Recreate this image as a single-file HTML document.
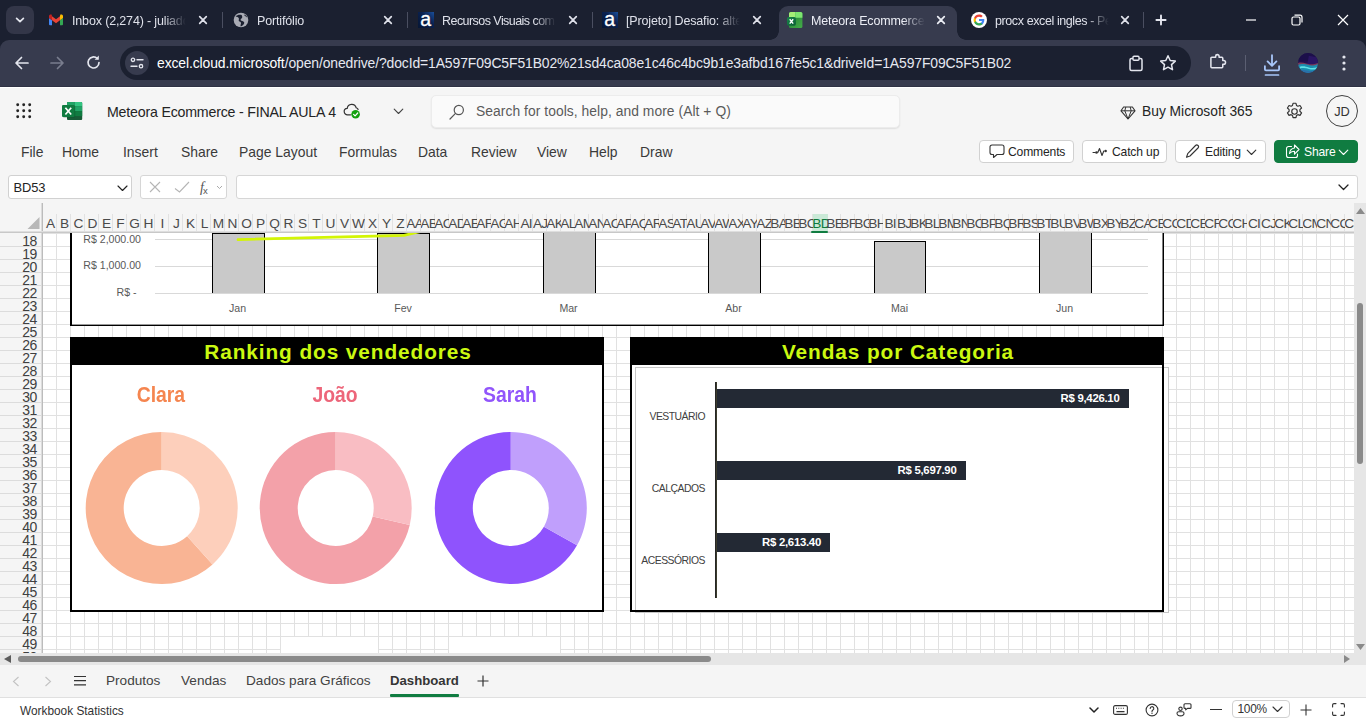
<!DOCTYPE html>
<html lang="en"><head><meta charset="utf-8"><title>Meteora Ecommerce - FINAL AULA 4</title>
<style>
*{box-sizing:border-box;margin:0;padding:0}
html,body{width:1366px;height:720px;overflow:hidden;background:#fff;font-family:"Liberation Sans",sans-serif;color:#242424}
body{position:relative}
.abs{position:absolute}
svg{display:block}
/* ---------- browser chrome ---------- */
#tabstrip{position:absolute;left:0;top:0;width:1366px;height:52px;background:#1b2030}
#toolbar{position:absolute;left:0;top:40px;width:1366px;height:47px;background:#373b4e;border-radius:9px 9px 0 0;box-shadow:inset 0 -1px 0 #2f3244}
#tabsearch{position:absolute;left:6px;top:6px;width:28px;height:28px;border-radius:8px;background:#333648}
.tab{position:absolute;top:6px;height:34px;width:180px;color:#dfe1ea;font-size:12.5px;line-height:28px;white-space:nowrap}
.tab .ico{position:absolute;left:9px;top:6px;width:16px;height:16px}
.tab .tt{position:absolute;left:33px;top:1px;width:115px;overflow:hidden;letter-spacing:-0.15px;
  -webkit-mask-image:linear-gradient(90deg,#000 80%,transparent 99%);mask-image:linear-gradient(90deg,#000 80%,transparent 99%)}
.tab .cl{position:absolute;left:157.500px;top:8px;width:12px;height:12px}
.tab.active{background:#373b4e;border-radius:9px 9px 0 0;color:#eceef5}
.tab.active:before,.tab.active:after{content:"";position:absolute;bottom:0;width:9px;height:9px;background:radial-gradient(circle at 0 0,transparent 8.5px,#373b4e 9px)}
.tab.active:before{left:-9px}
.tab.active:after{right:-9px;background:radial-gradient(circle at 100% 0,transparent 8.5px,#373b4e 9px)}
.tsep{position:absolute;top:12px;width:1px;height:16px;background:#4a4e60}
#urlbar{position:absolute;left:120px;top:6px;width:1071px;height:34px;border-radius:17px;background:#1b2030}
#urlbar .site{position:absolute;left:5px;top:5px;width:24px;height:24px;border-radius:12px;background:#373b4e}
#urlbar .url{position:absolute;left:37px;top:1px;line-height:33px;font-size:13.95px;color:#e6e8f0;white-space:nowrap;letter-spacing:-0.12px}
#urlbar .url b{font-weight:normal;color:#fff}
.tbi{position:absolute}
/* ---------- excel header ---------- */
#xl{position:absolute;left:0;top:87px;width:1366px;height:125px;background:#f5f5f5;box-shadow:inset 0 1px 0 #fff}
#xltitle{position:absolute;left:107px;top:14.500px;font-size:14.2px;line-height:20px;color:#242424;white-space:nowrap;letter-spacing:-0.2px}
#search{position:absolute;left:431px;top:7.500px;width:469px;height:33px;background:#fafafa;border:1px solid #ececec;border-radius:5px;box-shadow:0 1px 1.500px rgba(0,0,0,.09)}
#search span{position:absolute;left:44px;top:0;line-height:31px;font-size:13.85px;color:#5a5a5a;white-space:nowrap;letter-spacing:0.05px}
#buy{position:absolute;left:1142px;top:15px;font-size:13.8px;line-height:20px;white-space:nowrap}
#avatar{position:absolute;left:1326px;top:8px;width:32px;height:32px;border-radius:16px;border:1px solid #424242;font-size:12.8px;line-height:31px;text-align:center;color:#333}
.mi{position:absolute;top:55px;font-size:13.9px;line-height:20px;color:#3a3a3a;white-space:nowrap}
.rb{position:absolute;top:53px;height:23px;border:1px solid #d1d1d1;border-radius:4px;background:#fff;font-size:12.1px;line-height:21px;letter-spacing:-0.15px;color:#242424;white-space:nowrap}
.rb span{position:absolute;top:1px}
.rb.green{background:#107c41;border-color:#107c41;color:#fff}
#namebox{position:absolute;left:8px;top:88px;width:124px;height:24px;background:#fff;border:1px solid #d1d1d1;border-radius:3px;font-size:12.9px;line-height:24px;padding-left:4.500px;color:#222;letter-spacing:-0.1px}
#fxbox{position:absolute;left:140px;top:88px;width:87px;height:24px;background:#fff;border:1px solid #d6d6d6;border-radius:3px}
#fbar{position:absolute;left:236px;top:88px;width:1122px;height:24px;background:#fff;border:1px solid #d6d6d6;border-radius:3px}
/* ---------- grid ---------- */
#colhdr{position:absolute;left:0;top:212px;width:1354px;height:21px;background-color:#f5f5f5;background-image:linear-gradient(90deg,#e2e2e2 1px,transparent 1px);background-size:14px 19px;background-position:0 2px;background-repeat:repeat-x;overflow:hidden;z-index:3}
#colhdr .hl{position:absolute;left:0;top:19px;width:1354px;height:2px;background:linear-gradient(#e9e9e9,#bdbdbd)}
#colhdr .ul{position:absolute;left:811px;top:19px;width:17px;height:2px;background:#107c41;border-radius:1px}
#colhdr .selall{position:absolute;left:0;top:0;width:43px;height:20px;border-right:1px solid #bcbcbc;box-shadow:inset -1px 0 0 #dcdcdc;background:#f5f5f5}
.ch{position:absolute;top:0;width:14px;height:19px;overflow:hidden;font-size:13.7px;line-height:24px;color:#4a4a4a;white-space:nowrap;text-align:left;letter-spacing:-0.75px;padding-left:0;text-indent:-0.700px}
.ch.one{text-align:center;letter-spacing:0;padding-left:1px;text-indent:0}
.ch.ctr{text-align:center;letter-spacing:-0.9px;padding-left:0;text-indent:0}
.ch.sel{background:#cae9d7;color:#0e7a3e;top:2px;height:17px;line-height:20px;width:15px;overflow:hidden}
#rowhdr{position:absolute;left:0;top:232px;width:43px;height:421px;background:#f5f5f5;border-right:1px solid #bcbcbc;box-shadow:inset -1px 0 0 #dcdcdc;overflow:hidden}
.rh{position:absolute;left:0;width:36.700px;padding-right:5.300px;text-align:right;font-size:14px;letter-spacing:-0.55px;line-height:16px;color:#404040;height:13px;border-bottom:1px solid #dcdcdc;box-sizing:content-box}
#sheet{position:absolute;left:43px;top:232px;width:1311px;height:421px;overflow:hidden;background-color:#fff;
 background-image:linear-gradient(90deg,#e1e1e1 1px,transparent 1px),linear-gradient(#e1e1e1 1px,transparent 1px);
 background-size:14px 13px;background-position:13px 1px}
#vscroll{position:absolute;left:1354px;top:203px;width:12px;height:450px;background:#e6e6e6;z-index:4}
#hscroll{position:absolute;left:0;top:653px;width:1366px;height:12px;background:#e6e6e6}
#tabsbar{position:absolute;left:0;top:665px;width:1366px;height:33px;background:#f5f5f5;border-bottom:1px solid #e0e0e0}
.st{position:absolute;top:6px;font-size:13.6px;line-height:20px;color:#424242;white-space:nowrap}
#status{position:absolute;left:0;top:698px;width:1366px;height:22px;background:#fff}
#status .ws{position:absolute;left:20px;top:5px;font-size:11.85px;line-height:16px;color:#333}
/* ---------- charts ---------- */
.cl1{position:absolute;font-size:10.6px;line-height:14px;color:#595959;white-space:nowrap}
.cl2{position:absolute;font-size:10.4px;line-height:14px;color:#404040;white-space:nowrap;letter-spacing:-0.5px}
.ttl{position:absolute;height:28px;background:#000;text-align:center;color:#cbf911;font-weight:bold;font-size:20.8px;line-height:29px;white-space:nowrap;letter-spacing:0.92px}
.ttl span{display:inline-block;padding-left:2px}
.nm{position:absolute;width:100px;text-align:center;font-weight:bold;font-size:21.5px;line-height:28px;white-space:nowrap}
.nm span{display:inline-block;transform:scaleX(.9)}
.vl{position:absolute;right:9px;top:0;line-height:19px;font-size:11.4px;font-weight:bold;color:#fff;white-space:nowrap;letter-spacing:-0.28px}

</style></head><body>
<div id="tabstrip">
  <div id="tabsearch"><svg class="abs" style="left:8px;top:9px" width="12" height="10" viewBox="0 0 12 10"><path d="M2.600 3.300 L6 6.700 L9.400 3.300" fill="none" stroke="#e4e6ee" stroke-width="1.700" stroke-linecap="round" stroke-linejoin="round"/></svg></div>

  <div class="tab" style="left:39px">
    <svg class="ico" viewBox="0 0 16 16"><path d="M1 5.900L4 8.200V13.200H2A1 1 0 0 1 1 12.200z" fill="#4285f4"/><path d="M15 5.900L12 8.200V13.200h2a1 1 0 0 0 1-1z" fill="#34a853"/><path d="M4 4.200L8 7.200l4-3v4l-4 3-4-3z" fill="#ea4335"/><path d="M1 5.900V4.100c0-1.500 1.700-2.200 2.800-1.300L4 4.200v4z" fill="#c5221f"/><path d="M15 5.900V4.100c0-1.500-1.700-2.200-2.800-1.300L12 4.200v4z" fill="#fbbc04"/></svg>
    <div class="tt">Inbox (2,274) - juliadomingues</div>
    <svg class="cl" viewBox="0 0 12 12"><path d="M2.700 2.700l6.600 6.600M9.300 2.700l-6.600 6.600" stroke="#dfe1ea" stroke-width="1.700" stroke-linecap="round"/></svg>
  </div>
  <div class="tsep" style="left:222px"></div>

  <div class="tab" style="left:224px">
    <svg class="ico" viewBox="0 0 16 16"><circle cx="8" cy="8" r="7.300" fill="#a9abb4"/><path d="M2.600 4.600c1.500.2 2.700.7 3.200 1.700.5 1.100-.5 1.700.1 2.600.6.900 1.900.7 2.100 1.900.2 1.100-.7 2-.4 3.600 1.700-.5 2.900-1.700 3.500-2.900.5-1-.1-1.900-1.100-2.300-1-.4-2-.3-2.400-1.200-.4-1 1.300-1.500 1.600-2.600.2-.800-.1-1.700-.7-2.400-2.200-.6-4.600.1-5.900 1.600z" fill="#1b2030"/><path d="M11.400 2.600c-.3.800.3 1.300 1 1.700.8.400 1.100 1.100 1.900 1.300-.5-1.300-1.600-2.400-2.900-3z" fill="#1b2030"/></svg>
    <div class="tt">Portifólio</div>
    <svg class="cl" viewBox="0 0 12 12"><path d="M2.700 2.700l6.600 6.600M9.300 2.700l-6.600 6.600" stroke="#dfe1ea" stroke-width="1.700" stroke-linecap="round"/></svg>
  </div>
  <div class="tsep" style="left:407px"></div>

  <div class="tab" style="left:409px">
    <svg class="ico" viewBox="0 0 16 16"><defs><linearGradient id="alg" x1="0" y1="1" x2="1" y2="0"><stop offset="0" stop-color="#061634"/><stop offset=".6" stop-color="#0a2150"/><stop offset="1" stop-color="#1a4f9c"/></linearGradient></defs><rect width="16" height="16" fill="url(#alg)"/><text x="7.800" y="14.200" style="font-family:'Liberation Sans',sans-serif;font-size:19.500px;font-weight:normal" text-anchor="middle" fill="#fff" stroke="#fff" stroke-width=".3">a</text></svg>
    <div class="tt" style="letter-spacing:-0.55px">Recursos Visuais com Excel</div>
    <svg class="cl" viewBox="0 0 12 12"><path d="M2.700 2.700l6.600 6.600M9.300 2.700l-6.600 6.600" stroke="#dfe1ea" stroke-width="1.700" stroke-linecap="round"/></svg>
  </div>
  <div class="tsep" style="left:592px"></div>

  <div class="tab" style="left:593px">
    <svg class="ico" viewBox="0 0 16 16"><rect width="16" height="16" fill="url(#alg)"/><text x="7.800" y="14.200" style="font-family:'Liberation Sans',sans-serif;font-size:19.500px;font-weight:normal" text-anchor="middle" fill="#fff" stroke="#fff" stroke-width=".3">a</text></svg>
    <div class="tt">[Projeto] Desafio: alterar</div>
    <svg class="cl" viewBox="0 0 12 12"><path d="M2.700 2.700l6.600 6.600M9.300 2.700l-6.600 6.600" stroke="#dfe1ea" stroke-width="1.700" stroke-linecap="round"/></svg>
  </div>

  <div class="tab active" style="left:779px;width:178px">
    <svg class="ico" style="left:8px" viewBox="0 0 16 16"><defs><linearGradient id="xg1" x1="0" y1="0" x2="1" y2="1"><stop offset="0" stop-color="#1f7a35"/><stop offset="1" stop-color="#44ad48"/></linearGradient><linearGradient id="xg2" x1="0" y1="0" x2="1" y2="1"><stop offset="0" stop-color="#17864a"/><stop offset="1" stop-color="#0c5c34"/></linearGradient></defs><rect x="2" y="0" width="13.400" height="16" rx="1.600" fill="url(#xg1)"/><path d="M3.600 0H8.200V5.700H2V1.600A1.600 1.600 0 0 1 3.600 0z" fill="#a4ee76"/><path d="M8.200 0h5.600a1.600 1.600 0 0 1 1.600 1.600V5.700H8.200z" fill="#7de570"/><rect x="0" y="5" width="8.900" height="8.800" rx="1.700" fill="url(#xg2)"/><path d="M2.700 7.300l3.500 4.300M6.200 7.300l-3.500 4.300" stroke="#fff" stroke-width="1.350"/></svg>
    <div class="tt" style="left:32px">Meteora Ecommerce - FINAL</div>
    <svg class="cl" style="left:156px" viewBox="0 0 12 12"><path d="M2.700 2.700l6.600 6.600M9.300 2.700l-6.600 6.600" stroke="#eceef5" stroke-width="1.700" stroke-linecap="round"/></svg>
  </div>

  <div class="tab" style="left:962px">
    <svg class="ico" viewBox="0 0 16 16"><circle cx="8" cy="8" r="8" fill="#fff"/><path d="M13.300 8.100c0-.4 0-.8-.1-1.100H8v2.100h3c-.1.700-.5 1.300-1.100 1.700v1.400h1.800c1-1 1.600-2.400 1.600-4.100z" fill="#4285f4"/><path d="M8 13.500c1.500 0 2.700-.5 3.600-1.300l-1.800-1.400c-.5.300-1.100.5-1.800.5-1.400 0-2.600-.9-3-2.200H3.200v1.400c.9 1.800 2.700 3 4.800 3z" fill="#34a853"/><path d="M5 9.100c-.1-.3-.2-.7-.2-1.100s.1-.8.200-1.100V5.500H3.200C2.800 6.200 2.600 7.100 2.600 8s.2 1.800.6 2.500L5 9.100z" fill="#fbbc05"/><path d="M8 4.700c.8 0 1.500.3 2.100.8l1.600-1.600C10.700 3 9.500 2.500 8 2.500c-2.100 0-3.900 1.200-4.800 3L5 6.900c.4-1.300 1.600-2.200 3-2.200z" fill="#ea4335"/></svg>
    <div class="tt" style="letter-spacing:-0.4px">procx excel ingles - Pesquisa</div>
    <svg class="cl" style="left:156.500px" viewBox="0 0 12 12"><path d="M2.700 2.700l6.600 6.600M9.300 2.700l-6.600 6.600" stroke="#dfe1ea" stroke-width="1.700" stroke-linecap="round"/></svg>
  </div>
  <div class="tsep" style="left:1143px"></div>
  <svg class="abs" style="left:1154px;top:13px" width="14" height="14" viewBox="0 0 14 14"><path d="M7 2.400v9.200M2.400 7h9.200" stroke="#e4e6ee" stroke-width="1.900" stroke-linecap="round"/></svg>

  <!-- window controls -->
  <svg class="abs" style="left:1245px;top:14px" width="12" height="12" viewBox="0 0 12 12"><path d="M1 6h10" stroke="#fff" stroke-width="1.200"/></svg>
  <svg class="abs" style="left:1291px;top:14px" width="12" height="12" viewBox="0 0 12 12"><rect x="1" y="3" width="8" height="8" rx="1.500" fill="none" stroke="#fff" stroke-width="1.200"/><path d="M3.500 1.200H9a2 2 0 0 1 2 2v5.300" fill="none" stroke="#fff" stroke-width="1.200"/></svg>
  <svg class="abs" style="left:1337px;top:14px" width="12" height="12" viewBox="0 0 12 12"><path d="M1 1l10 10M11 1L1 11" stroke="#fff" stroke-width="1.200"/></svg>
</div>

<div id="toolbar">
  <svg class="tbi" style="left:14px;top:15px" width="16" height="16" viewBox="0 0 16 16"><path d="M14 8H2.500M7.500 2.500L2 8l5.500 5.500" fill="none" stroke="#e4e6ee" stroke-width="1.700" stroke-linecap="round" stroke-linejoin="round"/></svg>
  <svg class="tbi" style="left:49px;top:15px" width="16" height="16" viewBox="0 0 16 16"><path d="M2 8h11.500M8.500 2.500L14 8l-5.500 5.500" fill="none" stroke="#797d8e" stroke-width="1.700" stroke-linecap="round" stroke-linejoin="round"/></svg>
  <svg class="tbi" style="left:85px;top:14px" width="17" height="17" viewBox="0 0 17 17"><path d="M14 8.500a5.500 5.500 0 1 1-1.700-4" fill="none" stroke="#e4e6ee" stroke-width="1.700" stroke-linecap="round"/><path d="M13.800 1.500v4.200H9.600z" fill="#e4e6ee"/></svg>
  <div id="urlbar">
    <div class="site"><svg class="abs" style="left:5px;top:6px" width="14" height="12" viewBox="0 0 14 12"><circle cx="3" cy="2.800" r="1.700" fill="none" stroke="#e4e6ee" stroke-width="1.300"/><path d="M7 2.800h6" stroke="#e4e6ee" stroke-width="1.400" stroke-linecap="round"/><circle cx="11" cy="9.200" r="1.700" fill="none" stroke="#e4e6ee" stroke-width="1.300"/><path d="M1 9.200h6" stroke="#e4e6ee" stroke-width="1.400" stroke-linecap="round"/></svg></div>
    <div class="url"><b>excel.cloud.microsoft</b>/open/onedrive/?docId=1A597F09C5F51B02%21sd4ca08e1c46c4bc9b1e3afbd167fe5c1&amp;driveId=1A597F09C5F51B02</div>
    <svg class="abs" style="left:1008px;top:9px" width="16" height="17" viewBox="0 0 16 17"><rect x="2" y="3.500" width="12" height="12" rx="1.500" fill="none" stroke="#e4e6ee" stroke-width="1.500"/><rect x="5" y="1.200" width="6" height="4" rx="1" fill="#1b2030" stroke="#e4e6ee" stroke-width="1.400"/></svg>
    <svg class="abs" style="left:1039px;top:8px" width="18" height="18" viewBox="0 0 18 18"><path d="M9 1.800l2.200 4.700 5.100.6-3.800 3.500 1 5.100L9 13.200l-4.500 2.500 1-5.100L1.700 7.100l5.100-.6z" fill="none" stroke="#e4e6ee" stroke-width="1.500" stroke-linejoin="round"/></svg>
  </div>
  <svg class="tbi" style="left:1209px;top:13px" width="18" height="18" viewBox="0 0 18 18"><path d="M7 3.500a1.800 1.800 0 0 1 3.600 0V4.500H13.500a1 1 0 0 1 1 1V8h1a1.900 1.900 0 0 1 0 3.800h-1v2.700a1 1 0 0 1-1 1H3a1 1 0 0 1-1-1V5.500a1 1 0 0 1 1-1h4z" fill="none" stroke="#e4e6ee" stroke-width="1.600" stroke-linejoin="round" transform="scale(.95)"/></svg>
  <div class="abs" style="left:1245px;top:15px;width:1px;height:16px;background:#5b5f72"></div>
  <svg class="tbi" style="left:1263px;top:14px" width="18" height="22" viewBox="0 0 18 22"><path d="M9 1.200v10.500M4.600 7.400L9 11.800l4.400-4.400" fill="none" stroke="#a8c7fa" stroke-width="1.800" stroke-linecap="round" stroke-linejoin="round"/><path d="M1.900 12.200v3.100a1 1 0 0 0 1 1h12.200a1 1 0 0 0 1-1v-3.100" fill="none" stroke="#a8c7fa" stroke-width="1.800" stroke-linecap="round" stroke-linejoin="round"/><path d="M2.500 21h13" stroke="#a8c7fa" stroke-width="1.700" stroke-linecap="round"/></svg>
  <svg class="tbi" style="left:1298px;top:13px" width="20" height="20" viewBox="0 0 22 22"><defs><clipPath id="avc"><circle cx="11" cy="11" r="11"/></clipPath></defs><g clip-path="url(#avc)"><rect width="22" height="22" fill="#23104f"/><path d="M0 0h22v9H0z" fill="#1c0f4a"/><path d="M12 3l10 2v8H10z" fill="#2a1563"/><path d="M0 11c3-1 6-.5 9 .5s8 1.500 13-.5v4H0z" fill="#7a3b5a"/><path d="M0 13c4-1.500 8-1 11 0s7 1 11-1v10H0z" fill="#1a8fb0"/><path d="M2 15c4-1 7 0 10 1s6 .5 10-.5v2c-4 1-7 1-10 0s-6-1.500-10-.5z" fill="#5fe0e6"/><path d="M0 19c5-1 9 0 12 .5s7 0 10-1V22H0z" fill="#2b6fa8"/></g></svg>
  <svg class="tbi" style="left:1341px;top:14px" width="6" height="18" viewBox="0 0 6 18"><circle cx="3" cy="3" r="1.600" fill="#e4e6ee"/><circle cx="3" cy="9" r="1.600" fill="#e4e6ee"/><circle cx="3" cy="15" r="1.600" fill="#e4e6ee"/></svg>
</div>
<div id="xl">
  <!-- waffle -->
  <svg class="abs" style="left:16px;top:16px" width="16" height="16" viewBox="0 0 16 16"><g fill="#242424"><circle cx="1.700" cy="1.700" r="1.450"/><circle cx="7.700" cy="1.700" r="1.450"/><circle cx="13.700" cy="1.700" r="1.450"/><circle cx="1.700" cy="7.700" r="1.450"/><circle cx="7.700" cy="7.700" r="1.450"/><circle cx="13.700" cy="7.700" r="1.450"/><circle cx="1.700" cy="13.700" r="1.450"/><circle cx="7.700" cy="13.700" r="1.450"/><circle cx="13.700" cy="13.700" r="1.450"/></g></svg>
  <!-- excel logo -->
  <svg class="abs" style="left:62px;top:15px" width="21" height="18" viewBox="0 0 21 18"><rect x="5" y="0" width="15.200" height="18" rx="1" fill="#185c37"/><path d="M6 0h6.800v4.100H5V1a1 1 0 0 1 1-1z" fill="#21a366"/><path d="M12.800 0h6.400a1 1 0 0 1 1 1v3.100h-7.400z" fill="#33c481"/><rect x="5" y="4.100" width="7.800" height="5" fill="#107c41"/><rect x="12.800" y="4.100" width="7.400" height="5" fill="#21a366"/><rect x="5" y="9.100" width="7.800" height="5" fill="#185c37"/><rect x="12.800" y="9.100" width="7.400" height="5" fill="#107c41"/><rect x="1" y="3.600" width="12.200" height="12" rx="1" fill="#0b4c2a" opacity=".45"/><rect x="0" y="3" width="12.600" height="12" rx="1.100" fill="#107c41"/><path d="M3.400 5.700l5.800 6.800M9.200 5.700l-5.800 6.800" stroke="#fff" stroke-width="1.700"/></svg>
  <div id="xltitle">Meteora Ecommerce - FINAL AULA 4</div>
  <!-- cloud saved -->
  <svg class="abs" style="left:343px;top:16px" width="19" height="16" viewBox="0 0 19 16"><path d="M7.500 11.800H4.600a3.200 3.200 0 0 1-.4-6.400 4.600 4.600 0 0 1 9-.6 3.300 3.300 0 0 1 1.900 1.600" fill="none" stroke="#333" stroke-width="1.200" stroke-linecap="round"/><circle cx="12.600" cy="11.200" r="4.300" fill="#13a10e"/><path d="M10.600 11.300l1.500 1.500 2.600-2.800" fill="none" stroke="#fff" stroke-width="1.200" stroke-linecap="round" stroke-linejoin="round"/></svg>
  <svg class="abs" style="left:393px;top:21px" width="11" height="7" viewBox="0 0 11 7"><path d="M1.200 1.200l4.300 4.300 4.300-4.300" fill="none" stroke="#444" stroke-width="1.100" stroke-linecap="round" stroke-linejoin="round"/></svg>
  <div id="search">
    <svg class="abs" style="left:17px;top:8px" width="16" height="16" viewBox="0 0 16 16"><circle cx="9.800" cy="6" r="4.600" fill="none" stroke="#555" stroke-width="1.200"/><path d="M6.500 9.400L1 15" stroke="#555" stroke-width="1.200" stroke-linecap="round"/></svg>
    <span>Search for tools, help, and more (Alt + Q)</span>
  </div>
  <!-- diamond -->
  <svg class="abs" style="left:1119.500px;top:18.500px" width="16" height="14" viewBox="0 0 16 14"><path d="M3.600 1h8.800L15 4.800 8 13 1 4.800z" fill="none" stroke="#333" stroke-width="1.100" stroke-linejoin="round"/><path d="M1 4.800h14M5.800 1L4.800 4.800 8 13l3.200-8.200L10.200 1" fill="none" stroke="#333" stroke-width="1" stroke-linejoin="round"/></svg>
  <div id="buy">Buy Microsoft 365</div>
  <!-- gear -->
  <svg class="abs" style="left:1284.500px;top:14.500px" width="19" height="19" viewBox="0 0 18 18"><path d="M7.600 1.200h2.800l.5 2.100 1.300.7 2-.7 1.500 2.400-1.600 1.500v1.600l1.600 1.500-1.500 2.400-2-.7-1.300.7-.5 2.100H7.600l-.5-2.100-1.300-.7-2 .7-1.500-2.400 1.600-1.500V7.200L2.300 5.700l1.500-2.400 2 .7 1.300-.7z" fill="none" stroke="#333" stroke-width="1.100" stroke-linejoin="round"/><circle cx="9" cy="9" r="2.600" fill="none" stroke="#333" stroke-width="1.100"/></svg>
  <div id="avatar">JD</div>

  <!-- menu -->
  <div class="mi" style="left:21px">File</div>
  <div class="mi" style="left:62px">Home</div>
  <div class="mi" style="left:123px">Insert</div>
  <div class="mi" style="left:181px">Share</div>
  <div class="mi" style="left:239px">Page Layout</div>
  <div class="mi" style="left:339px">Formulas</div>
  <div class="mi" style="left:418px">Data</div>
  <div class="mi" style="left:471px">Review</div>
  <div class="mi" style="left:537px">View</div>
  <div class="mi" style="left:589px">Help</div>
  <div class="mi" style="left:640px">Draw</div>

  <div class="rb" style="left:979px;width:95px">
    <svg class="abs" style="left:9px;top:3px" width="16" height="15" viewBox="0 0 16 15"><path d="M3 1h10a2 2 0 0 1 2 2v5.500a2 2 0 0 1-2 2H8l-3.500 3v-3H3a2 2 0 0 1-2-2V3a2 2 0 0 1 2-2z" fill="none" stroke="#333" stroke-width="1.100" stroke-linejoin="round"/></svg>
    <span style="left:28px">Comments</span></div>
  <div class="rb" style="left:1082px;width:85px">
    <svg class="abs" style="left:9px;top:6px" width="16" height="10" viewBox="0 0 16 10"><path d="M1 5.500h2.200M5.800 5.500L7.500 1.500l2.500 7 1.800-4.500" fill="none" stroke="#333" stroke-width="1.100" stroke-linecap="round" stroke-linejoin="round"/><circle cx="4.500" cy="5.500" r="1.300" fill="#333"/><circle cx="13.600" cy="4" r="1.300" fill="#333"/></svg>
    <span style="left:29px">Catch up</span></div>
  <div class="rb" style="left:1175px;width:91px">
    <svg class="abs" style="left:9px;top:3px" width="15" height="15" viewBox="0 0 15 15"><path d="M10.500 1.500a1.500 1.500 0 0 1 2.500 2.500L5 12l-3.500 1.200L2.700 9.700z" fill="none" stroke="#333" stroke-width="1.100" stroke-linejoin="round"/></svg>
    <span style="left:29px">Editing</span>
    <svg class="abs" style="left:70px;top:8px" width="11" height="7" viewBox="0 0 11 7"><path d="M1.200 1.200l4.300 4.300 4.300-4.300" fill="none" stroke="#333" stroke-width="1.100" stroke-linecap="round" stroke-linejoin="round"/></svg></div>
  <div class="rb green" style="left:1274px;width:84px">
    <svg class="abs" style="left:10px;top:3px" width="15" height="15" viewBox="0 0 15 15"><path d="M6.500 2.500H3.500a2 2 0 0 0-2 2v7a2 2 0 0 0 2 2h7a2 2 0 0 0 2-2V10" fill="none" stroke="#fff" stroke-width="1.100" stroke-linecap="round"/><path d="M9.500 1v3C6 4.500 4.800 7 4.500 9.500 6 7.800 7.500 7.200 9.500 7.200v3L14 5.500z" fill="none" stroke="#fff" stroke-width="1.100" stroke-linejoin="round"/></svg>
    <span style="left:29px">Share</span>
    <svg class="abs" style="left:63px;top:8px" width="11" height="7" viewBox="0 0 11 7"><path d="M1.200 1.200l4.300 4.300 4.300-4.300" fill="none" stroke="#fff" stroke-width="1.100" stroke-linecap="round" stroke-linejoin="round"/></svg></div>

  <div class="abs" style="left:41px;top:116px;width:2px;height:10px;background:linear-gradient(90deg,#dcdcdc 50%,#bcbcbc 50%)"></div>
  <!-- formula row -->
  <div id="namebox">BD53
    <svg class="abs" style="left:108px;top:9px" width="11" height="7" viewBox="0 0 11 7"><path d="M1 1l4.500 4.500L10 1" fill="none" stroke="#222" stroke-width="1.150" stroke-linecap="round" stroke-linejoin="round"/></svg></div>
  <div id="fxbox">
    <svg class="abs" style="left:8px;top:5px" width="12" height="12" viewBox="0 0 12 12"><path d="M1 1l10 10M11 1L1 11" stroke="#b5b5b5" stroke-width="1.100"/></svg>
    <svg class="abs" style="left:33px;top:5px" width="16" height="12" viewBox="0 0 16 12"><path d="M1 7.500L5.500 11 15 1" fill="none" stroke="#b5b5b5" stroke-width="1.100"/></svg>
    <div class="abs" style="left:59px;top:1px;font-family:'Liberation Serif',serif;font-style:italic;font-size:14px;line-height:21px;color:#555">f<span style="font-size:9.500px;font-style:normal;font-family:'Liberation Sans',sans-serif;position:relative;top:2px;left:-1px">x</span></div>
    <svg class="abs" style="left:75px;top:9px" width="7" height="5" viewBox="0 0 7 5"><path d="M1 1l2.500 2.500L6 1" fill="none" stroke="#aaa" stroke-width="1"/></svg>
  </div>
  <div id="fbar"><svg class="abs" style="left:1101px;top:8px" width="11" height="7" viewBox="0 0 11 7"><path d="M1 1l4.500 4.500L10 1" fill="none" stroke="#222" stroke-width="1.300" stroke-linecap="round" stroke-linejoin="round"/></svg></div>
</div>
<div id="colhdr"><div class="selall"><svg width="42" height="20" viewBox="0 0 42 20"><polygon points="39.500,5 39.500,17 27.500,17" fill="#b8b8b8"/></svg></div><div class="ch one" style="left:43px">A</div><div class="ch one" style="left:57px">B</div><div class="ch one" style="left:71px">C</div><div class="ch one" style="left:85px">D</div><div class="ch one" style="left:99px">E</div><div class="ch one" style="left:113px">F</div><div class="ch one" style="left:127px">G</div><div class="ch one" style="left:141px">H</div><div class="ch one" style="left:155px">I</div><div class="ch one" style="left:169px">J</div><div class="ch one" style="left:183px">K</div><div class="ch one" style="left:197px">L</div><div class="ch one" style="left:211px">M</div><div class="ch one" style="left:225px">N</div><div class="ch one" style="left:239px">O</div><div class="ch one" style="left:253px">P</div><div class="ch one" style="left:267px">Q</div><div class="ch one" style="left:281px">R</div><div class="ch one" style="left:295px">S</div><div class="ch one" style="left:309px">T</div><div class="ch one" style="left:323px">U</div><div class="ch one" style="left:337px">V</div><div class="ch one" style="left:351px">W</div><div class="ch one" style="left:365px">X</div><div class="ch one" style="left:379px">Y</div><div class="ch one" style="left:393px">Z</div><div class="ch" style="left:407px">AA</div><div class="ch" style="left:421px">AB</div><div class="ch" style="left:435px">AC</div><div class="ch" style="left:449px">AD</div><div class="ch" style="left:463px">AE</div><div class="ch" style="left:477px">AF</div><div class="ch" style="left:491px">AG</div><div class="ch" style="left:505px">AH</div><div class="ch ctr" style="left:519px">AI</div><div class="ch ctr" style="left:533px">AJ</div><div class="ch" style="left:547px">AK</div><div class="ch" style="left:561px">AL</div><div class="ch" style="left:575px">AM</div><div class="ch" style="left:589px">AN</div><div class="ch" style="left:603px">AO</div><div class="ch" style="left:617px">AP</div><div class="ch" style="left:631px">AQ</div><div class="ch" style="left:645px">AR</div><div class="ch" style="left:659px">AS</div><div class="ch" style="left:673px">AT</div><div class="ch" style="left:687px">AU</div><div class="ch" style="left:701px">AV</div><div class="ch" style="left:715px">AW</div><div class="ch" style="left:729px">AX</div><div class="ch" style="left:743px">AY</div><div class="ch" style="left:757px">AZ</div><div class="ch" style="left:771px">BA</div><div class="ch" style="left:785px">BB</div><div class="ch" style="left:799px">BC</div><div class="ch sel" style="left:813px">BD</div><div class="ch" style="left:827px">BE</div><div class="ch" style="left:841px">BF</div><div class="ch" style="left:855px">BG</div><div class="ch" style="left:869px">BH</div><div class="ch ctr" style="left:883px">BI</div><div class="ch ctr" style="left:897px">BJ</div><div class="ch" style="left:911px">BK</div><div class="ch" style="left:925px">BL</div><div class="ch" style="left:939px">BM</div><div class="ch" style="left:953px">BN</div><div class="ch" style="left:967px">BO</div><div class="ch" style="left:981px">BP</div><div class="ch" style="left:995px">BQ</div><div class="ch" style="left:1009px">BR</div><div class="ch" style="left:1023px">BS</div><div class="ch" style="left:1037px">BT</div><div class="ch" style="left:1051px">BU</div><div class="ch" style="left:1065px">BV</div><div class="ch" style="left:1079px">BW</div><div class="ch" style="left:1093px">BX</div><div class="ch" style="left:1107px">BY</div><div class="ch" style="left:1121px">BZ</div><div class="ch" style="left:1135px">CA</div><div class="ch" style="left:1149px">CB</div><div class="ch" style="left:1163px">CC</div><div class="ch" style="left:1177px">CD</div><div class="ch" style="left:1191px">CE</div><div class="ch" style="left:1205px">CF</div><div class="ch" style="left:1219px">CG</div><div class="ch" style="left:1233px">CH</div><div class="ch ctr" style="left:1247px">CI</div><div class="ch ctr" style="left:1261px">CJ</div><div class="ch" style="left:1275px">CK</div><div class="ch" style="left:1289px">CL</div><div class="ch" style="left:1303px">CM</div><div class="ch" style="left:1317px">CN</div><div class="ch" style="left:1331px">CO</div><div class="ch" style="left:1345px">CP</div><div class="hl"></div><div class="ul"></div></div>
<div id="rowhdr"><div class="rh" style="top:1px">18</div><div class="rh" style="top:14px">19</div><div class="rh" style="top:27px">20</div><div class="rh" style="top:40px">21</div><div class="rh" style="top:53px">22</div><div class="rh" style="top:66px">23</div><div class="rh" style="top:79px">24</div><div class="rh" style="top:92px">25</div><div class="rh" style="top:105px">26</div><div class="rh" style="top:118px">27</div><div class="rh" style="top:131px">28</div><div class="rh" style="top:144px">29</div><div class="rh" style="top:157px">30</div><div class="rh" style="top:170px">31</div><div class="rh" style="top:183px">32</div><div class="rh" style="top:196px">33</div><div class="rh" style="top:209px">34</div><div class="rh" style="top:222px">35</div><div class="rh" style="top:235px">36</div><div class="rh" style="top:248px">37</div><div class="rh" style="top:261px">38</div><div class="rh" style="top:274px">39</div><div class="rh" style="top:287px">40</div><div class="rh" style="top:300px">41</div><div class="rh" style="top:313px">42</div><div class="rh" style="top:326px">43</div><div class="rh" style="top:339px">44</div><div class="rh" style="top:352px">45</div><div class="rh" style="top:365px">46</div><div class="rh" style="top:378px">47</div><div class="rh" style="top:391px">48</div><div class="rh" style="top:404px">49</div><div class="rh" style="top:417px">50</div></div>
<div id="sheet">
<div class="abs" style="left:27px;top:-32px;width:1094px;height:126px;background:#fff;border:2px solid #000;border-bottom-width:1px;border-right-width:1px;box-shadow:inset 0 -1px 0 rgba(0,0,0,.4),inset -1px 0 0 rgba(0,0,0,.5)"></div>
<div class="abs" style="left:112px;top:7px;width:993px;height:1px;background:#d9d9d9"></div>
<div class="abs" style="left:112px;top:34px;width:993px;height:1px;background:#d9d9d9"></div>
<div class="abs" style="left:112px;top:61px;width:993px;height:1px;background:#d9d9d9"></div>
<div class="cl1" style="left:17px;top:-0.5px;width:81px;text-align:right">R$ 2,000.00</div>
<div class="cl1" style="left:17px;top:26.3px;width:81px;text-align:right">R$ 1,000.00</div>
<div class="cl1" style="left:12.5px;top:53.3px;width:81px;text-align:right">R$ -</div>
<div class="abs" style="left:169px;top:1px;width:53px;height:60px;background:#c9c9c9;border:1px solid #000;border-bottom:none"></div>
<div class="abs" style="left:334px;top:1px;width:53px;height:60px;background:#c9c9c9;border:1px solid #000;border-bottom:none"></div>
<div class="abs" style="left:500px;top:-7px;width:53px;height:68px;background:#c9c9c9;border:1px solid #000;border-bottom:none"></div>
<div class="abs" style="left:665px;top:-7px;width:53px;height:68px;background:#c9c9c9;border:1px solid #000;border-bottom:none"></div>
<div class="abs" style="left:831px;top:9px;width:52px;height:52px;background:#c9c9c9;border:1px solid #000;border-bottom:none"></div>
<div class="abs" style="left:996px;top:-7px;width:53px;height:68px;background:#c9c9c9;border:1px solid #000;border-bottom:none"></div>
<div class="cl1" style="left:164.5px;top:69.2px;width:60px;text-align:center">Jan</div>
<div class="cl1" style="left:330px;top:69.2px;width:60px;text-align:center">Fev</div>
<div class="cl1" style="left:495.5px;top:69.2px;width:60px;text-align:center">Mar</div>
<div class="cl1" style="left:660.5px;top:69.2px;width:60px;text-align:center">Abr</div>
<div class="cl1" style="left:826.5px;top:69.2px;width:60px;text-align:center">Mai</div>
<div class="cl1" style="left:991.5px;top:69.2px;width:60px;text-align:center">Jun</div>
<svg class="abs" style="left:187px;top:-4px" width="200" height="20" viewBox="0 0 200 20"><path d="M8 11.600 L174 7.400 L192 3.200" fill="none" stroke="#d3f505" stroke-width="2.700" stroke-linecap="round" stroke-linejoin="round"/></svg>
<div class="abs" style="left:27px;top:105px;width:534px;height:275px;background:#fff;border:2px solid #000"></div>
<div class="ttl" style="left:27px;top:105px;width:534px"><span>Ranking dos vendedores</span></div>
<div class="nm" style="left:68px;top:148.5px;color:#f5854f"><span>Clara</span></div>
<div class="nm" style="left:242px;top:148.5px;color:#ed667a"><span>João</span></div>
<div class="nm" style="left:417px;top:148.5px;color:#9155fb"><span>Sarah</span></div>
<svg class="abs" style="left:29px;top:188px" width="530" height="180" viewBox="72 420 530 180"><path d="M212.55 564.48 A76 76 0 1 1 161.70 432.00 L161.70 470.00 A38 38 0 1 0 187.13 536.24 Z" fill="#f9b494"/><path d="M161.70 432.00 A76 76 0 0 1 212.55 564.48 L187.13 536.24 A38 38 0 0 0 161.70 470.00 Z" fill="#fdcfbb"/><path d="M409.75 525.10 A76 76 0 1 1 335.70 432.00 L335.70 470.00 A38 38 0 1 0 372.73 516.55 Z" fill="#f3a1a9"/><path d="M335.70 432.00 A76 76 0 0 1 409.75 525.10 L372.73 516.55 A38 38 0 0 0 335.70 470.00 Z" fill="#f9bdc3"/><path d="M577.01 545.31 A76 76 0 1 1 510.80 432.00 L510.80 470.00 A38 38 0 1 0 543.91 526.65 Z" fill="#8f53fd"/><path d="M510.80 432.00 A76 76 0 0 1 577.01 545.31 L543.91 526.65 A38 38 0 0 0 510.80 470.00 Z" fill="#c09ffc"/></svg>
<div class="abs" style="left:587px;top:105px;width:534px;height:275px;background:#fff"></div>
<div class="abs" style="left:592px;top:135px;width:534px;height:246px;background:#fff;border:1px solid #c6c6c6"></div>
<div class="abs" style="left:587px;top:105px;width:534px;height:275px;border:2px solid #000"></div>
<div class="ttl" style="left:587px;top:105px;width:534px"><span>Vendas por Categoria</span></div>
<div class="abs" style="left:672px;top:150px;width:2px;height:216px;background:linear-gradient(90deg,#262626 0,#262626 70%,#a5a94a 100%)"></div>
<div class="abs" style="left:674px;top:157px;width:411.5px;height:19px;background:#232934"><div class="vl">R$ 9,426.10</div></div>
<div class="cl2" style="left:581px;top:178px;width:81px;text-align:right">VESTUÁRIO</div>
<div class="abs" style="left:674px;top:229px;width:248.5px;height:19px;background:#232934"><div class="vl">R$ 5,697.90</div></div>
<div class="cl2" style="left:581px;top:250px;width:81px;text-align:right">CALÇADOS</div>
<div class="abs" style="left:674px;top:301px;width:113px;height:19px;background:#232934"><div class="vl">R$ 2,613.40</div></div>
<div class="cl2" style="left:581px;top:322px;width:81px;text-align:right">ACESSÓRIOS</div>
<div class="abs" style="left:238px;top:405px;width:97px;height:20px;background:#fff"></div>
<div class="abs" style="left:406px;top:405px;width:111px;height:20px;background:#fff"></div>
</div>
<div id="vscroll">
  <svg class="abs" style="left:2px;top:5px" width="9" height="6" viewBox="0 0 9 7" preserveAspectRatio="none"><path d="M4.500 0L9 7H0z" fill="#8a8a8a"/></svg>
  <div class="abs" style="left:3px;top:100px;width:6px;height:161px;border-radius:3px;background:#8a8a8a"></div>
  <svg class="abs" style="left:2px;top:441px" width="9" height="6" viewBox="0 0 9 6"><path d="M0 0h9L4.500 6z" fill="#8a8a8a"/></svg>
</div>
<div id="hscroll">
  <svg class="abs" style="left:4px;top:2px" width="7" height="8" viewBox="0 0 7 8"><path d="M7 0v8L0 4z" fill="#5c5c5c"/></svg>
  <div class="abs" style="left:18px;top:3px;width:693px;height:6px;border-radius:3px;background:#8a8a8a"></div>
  <svg class="abs" style="left:1344px;top:2px" width="6" height="8" viewBox="0 0 6 8"><path d="M0 0v8L6 4z" fill="#8a8a8a"/></svg>
</div>
<div id="tabsbar">
  <svg class="abs" style="left:12px;top:11px" width="8" height="11" viewBox="0 0 8 11"><path d="M6.500 1L1.500 5.500l5 4.500" fill="none" stroke="#c2c2c2" stroke-width="1.100"/></svg>
  <svg class="abs" style="left:44px;top:11px" width="8" height="11" viewBox="0 0 8 11"><path d="M1.500 1l5 4.500-5 4.500" fill="none" stroke="#c2c2c2" stroke-width="1.100"/></svg>
  <svg class="abs" style="left:73px;top:10px" width="14" height="11" viewBox="0 0 14 11"><path d="M1 1.500h12M1 5.700h12M1 9.900h12" stroke="#333" stroke-width="1.200"/></svg>
  <div class="st" style="left:106px">Produtos</div>
  <div class="st" style="left:181px">Vendas</div>
  <div class="st" style="left:246px">Dados para Gráficos</div>
  <div class="st" style="left:390px;font-weight:bold;color:#353535;font-size:13.2px">Dashboard</div>
  <div class="abs" style="left:390px;top:28.500px;width:69px;height:3px;background:#107c41;border-radius:1px"></div>
  <svg class="abs" style="left:477px;top:10px" width="12" height="12" viewBox="0 0 12 12"><path d="M6 .5v11M.5 6h11" stroke="#333" stroke-width="1.200"/></svg>
</div>
<div id="status">
  <div class="ws">Workbook Statistics</div>
  <svg class="abs" style="left:1089px;top:9px" width="10" height="7" viewBox="0 0 10 7"><path d="M1 1l4 4 4-4" fill="none" stroke="#222" stroke-width="1.500" stroke-linecap="round" stroke-linejoin="round"/></svg>
  <svg class="abs" style="left:1113px;top:7px" width="15" height="10" viewBox="0 0 15 10"><rect x=".6" y=".6" width="13.800" height="8.800" rx="1.500" fill="none" stroke="#333" stroke-width="1.100"/><path d="M3 3.200h1M5.300 3.200h1M7.600 3.200h1M9.900 3.200h1M3.500 6.600h8" stroke="#333" stroke-width="1.100"/></svg>
  <svg class="abs" style="left:1145px;top:5px" width="14" height="14" viewBox="0 0 14 14"><circle cx="7" cy="7" r="5.900" fill="none" stroke="#333" stroke-width="1.100"/><path d="M5.200 5.500a1.800 1.800 0 1 1 2.700 1.500c-.6.400-.9.700-.9 1.400" fill="none" stroke="#333" stroke-width="1.100" stroke-linecap="round"/><circle cx="7" cy="10.200" r=".7" fill="#333"/></svg>
  <svg class="abs" style="left:1176px;top:5px" width="16" height="14" viewBox="0 0 16 14"><circle cx="4.500" cy="5.800" r="1.700" fill="none" stroke="#333" stroke-width="1.100"/><path d="M1 10.300c0-1 .8-1.500 1.600-1.500h3.800c.8 0 1.600.5 1.600 1.500 0 1.700-1.600 2.600-3.500 2.600S1 12 1 10.300z" fill="none" stroke="#333" stroke-width="1.100"/><path d="M9 .8h5a1 1 0 0 1 1 1v2.600a1 1 0 0 1-1 1h-2.500L9.700 6.900V5.400H9a1 1 0 0 1-1-1V1.800a1 1 0 0 1 1-1z" fill="none" stroke="#333" stroke-width="1.100" stroke-linejoin="round"/></svg>
  <div class="abs" style="left:1210px;top:11px;width:12px;height:1px;background:#333"></div>
  <div class="abs" style="left:1232px;top:2px;width:58px;height:18px;border:1px solid #d1d1d1;border-radius:4px;background:#fff;font-size:11.9px;line-height:16px;color:#333;padding-left:4.500px;letter-spacing:-0.3px">100%
    <svg class="abs" style="left:39px;top:5px" width="11" height="7" viewBox="0 0 11 7"><path d="M1 1l4.500 4.500L10 1" fill="none" stroke="#333" stroke-width="1.100" stroke-linecap="round" stroke-linejoin="round"/></svg></div>
  <svg class="abs" style="left:1300px;top:6px" width="12" height="12" viewBox="0 0 12 12"><path d="M6 .5v11M.5 6h11" stroke="#333" stroke-width="1.100"/></svg>
  <svg class="abs" style="left:1332px;top:5px" width="13" height="13" viewBox="0 0 13 13"><path d="M.6 4V2a1.400 1.400 0 0 1 1.400-1.400h2M9 .6h2A1.400 1.400 0 0 1 12.400 2v2M12.400 9v2a1.400 1.400 0 0 1-1.400 1.400H9M4 12.400H2A1.400 1.400 0 0 1 .6 11V9" fill="none" stroke="#333" stroke-width="1.100" stroke-linecap="round"/></svg>
</div>
</body></html>
